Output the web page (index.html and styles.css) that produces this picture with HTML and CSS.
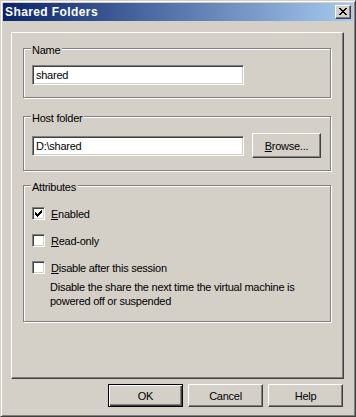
FILE: index.html
```html
<!DOCTYPE html>
<html>
<head>
<meta charset="utf-8">
<link rel="stylesheet" href="styles.css">
</head>
<body>
<div class="window">
  <div class="titlebar">
    <span class="title">Shared Folders</span>
    <span class="close">
      <svg width="8" height="7" viewBox="0 0 8 7" shape-rendering="crispEdges"><path d="M0 0h2v1h-2zM6 0h2v1h-2zM1 1h2v1h-2zM5 1h2v1h-2zM2 2h4v1h-4zM3 3h2v1h-2zM2 4h4v1h-4zM1 5h2v1h-2zM5 5h2v1h-2zM0 6h2v1h-2zM6 6h2v1h-2z" fill="#000"/></svg>
    </span>
  </div>
  <div class="content">
    <div class="panel">
      <div class="group group-name">
        <span class="legend">Name</span>
        <div class="field">shared</div>
      </div>
      <div class="group group-host">
        <span class="legend">Host folder</span>
        <div class="row">
          <div class="field">D:\shared</div>
          <div class="btn browse"><u>B</u>rowse...</div>
        </div>
      </div>
      <div class="group group-attr">
        <span class="legend">Attributes</span>
        <div class="check">
          <span class="box"><svg width="7" height="7" viewBox="0 0 7 7" shape-rendering="crispEdges"><path d="M6 0h1v1h-1zM5 1h2v1h-2zM0 2h1v1h-1zM4 2h3v1h-3zM0 3h2v1h-2zM3 3h3v1h-3zM0 4h5v1h-5zM1 5h3v1h-3zM2 6h1v1h-1z" fill="#000"/></svg></span>
          <span class="label"><u>E</u>nabled</span>
        </div>
        <div class="check">
          <span class="box"></span>
          <span class="label"><u>R</u>ead-only</span>
        </div>
        <div class="check last">
          <span class="box"></span>
          <span class="label"><u>D</u>isable after this session</span>
        </div>
        <div class="desc">Disable the share the next time the virtual machine is<br>powered off or suspended</div>
      </div>
    </div>
    <div class="buttons">
      <div class="btn default">OK</div>
      <div class="btn">Cancel</div>
      <div class="btn">Help</div>
    </div>
  </div>
</div>
</body>
</html>
```

FILE: styles.css
```css
html, body {
  margin: 0;
  padding: 0;
  background: #d4d0c8;
}
body {
  font-family: "Liberation Sans", Arial, sans-serif;
  font-size: 11px;
  letter-spacing: -0.25px;
  color: #000;
}
.window {
  width: 356px;
  height: 417px;
  box-sizing: border-box;
  background: #d4d0c8;
  border: 1px solid;
  border-color: #d4d0c8 #404040 #404040 #d4d0c8;
  box-shadow: inset 1px 1px 0 #fff, inset -1px -1px 0 #808080;
  padding: 2px;
  display: flex;
  flex-direction: column;
}
.titlebar {
  height: 18px;
  display: flex;
  align-items: center;
  justify-content: space-between;
  background: linear-gradient(to right, #0a246a, #a6caf0);
  padding-left: 2px;
  padding-right: 2px;
}
.title {
  color: #fff;
  font-weight: bold;
  font-size: 12px;
  letter-spacing: 0.4px;
}
.close {
  width: 16px;
  height: 14px;
  box-sizing: border-box;
  background: #d4d0c8;
  border: 1px solid;
  border-color: #fff #404040 #404040 #fff;
  box-shadow: inset -1px -1px 0 #808080;
  display: flex;
  align-items: center;
  justify-content: center;
  padding: 0 1px 1px 0;
}
.close svg { display: block; }
.content {
  padding: 11px 9px 0 8px;
}
.panel {
  width: 333px;
  height: 347px;
  box-sizing: border-box;
  border: 1px solid;
  border-color: #fff #404040 #404040 #fff;
  box-shadow: inset -1px -1px 0 #808080;
  padding: 15px 11px 0 11px;
}
.group {
  position: relative;
  width: 308px;
  box-sizing: border-box;
  border: 1px solid #808080;
  box-shadow: 1px 1px 0 #fff, inset 1px 1px 0 #fff;
  padding: 0 8px;
}
.legend {
  position: absolute;
  top: -5px;
  left: 7px;
  background: #d4d0c8;
  padding: 0 2px 0 1px;
  line-height: 13px;
}
.group-name {
  height: 50px;
  padding-top: 16px;
}
.group-host {
  height: 55px;
  margin-top: 18px;
  padding-top: 16px;
}
.group-attr {
  height: 137px;
  margin-top: 14px;
  padding-top: 21px;
}
.field {
  width: 212px;
  height: 20px;
  box-sizing: border-box;
  background: #fff;
  border: 1px solid;
  border-color: #808080 #fff #fff #808080;
  box-shadow: inset 1px 1px 0 #404040, inset -1px -1px 0 #d4d0c8;
  padding: 0 3px;
  line-height: 18px;
}
.row {
  display: flex;
  align-items: center;
  gap: 8px;
}
.btn {
  width: 75px;
  height: 23px;
  box-sizing: border-box;
  border: 1px solid;
  border-color: #fff #404040 #404040 #fff;
  box-shadow: inset -1px -1px 0 #808080;
  display: flex;
  align-items: center;
  justify-content: center;
}
.btn.browse {
  width: 69px;
  height: 25px;
}
.btn.default {
  border: 1px solid #000;
  box-shadow: inset 1px 1px 0 #fff, inset -1px -1px 0 #404040, inset -2px -2px 0 #808080;
}
.check {
  display: flex;
  align-items: center;
  height: 13px;
  margin-bottom: 14px;
}
.check.last { margin-bottom: 0; }
.box {
  width: 13px;
  height: 13px;
  box-sizing: border-box;
  background: #fff;
  border: 1px solid;
  border-color: #808080 #fff #fff #808080;
  box-shadow: inset 1px 1px 0 #404040, inset -1px -1px 0 #d4d0c8;
  display: flex;
  align-items: center;
  justify-content: center;
  margin-right: 6px;
}
.box svg { display: block; }
.desc {
  margin-top: 6px;
  margin-left: 18px;
  line-height: 14px;
}
.buttons {
  display: flex;
  justify-content: flex-end;
  gap: 5px;
  margin-top: 5px;
  padding-right: 1px;
}
```
